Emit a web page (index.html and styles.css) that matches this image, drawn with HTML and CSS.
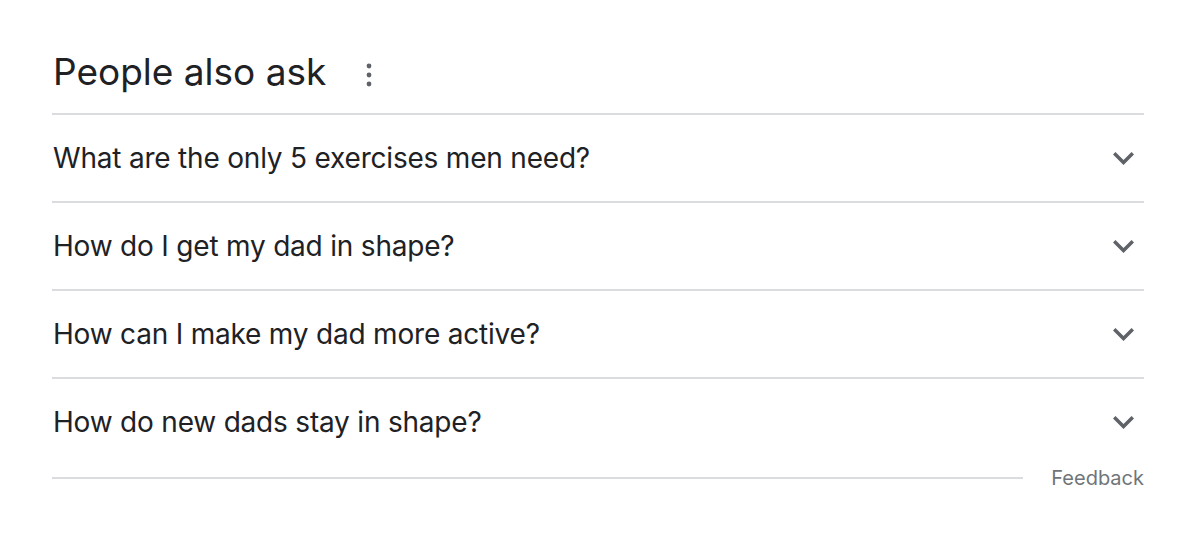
FILE: index.html
```html
<!DOCTYPE html>
<html>
<head>
<meta charset="utf-8">
<link rel="stylesheet" href="styles.css">
</head>
<body>
<div class="paa">
  <div class="paa-head">
    <h2 class="paa-title">People also ask</h2>
    <span class="paa-menu">
      <svg width="6" height="24" viewBox="0 0 6 24"><circle cx="3" cy="3" r="2.4" fill="#5f6368"/><circle cx="3" cy="12" r="2.4" fill="#5f6368"/><circle cx="3" cy="21" r="2.4" fill="#5f6368"/></svg>
    </span>
  </div>
  <div class="paa-row"><span class="paa-q">What are the only 5 exercises men need?</span><svg class="chev" width="21" height="13" viewBox="6 8.59 12 7.41"><path d="M16.59 8.59L12 13.17 7.41 8.59 6 10l6 6 6-6z" fill="#5f6368"/></svg></div>
  <div class="paa-row"><span class="paa-q">How do I get my dad in shape?</span><svg class="chev" width="21" height="13" viewBox="6 8.59 12 7.41"><path d="M16.59 8.59L12 13.17 7.41 8.59 6 10l6 6 6-6z" fill="#5f6368"/></svg></div>
  <div class="paa-row"><span class="paa-q">How can I make my dad more active?</span><svg class="chev" width="21" height="13" viewBox="6 8.59 12 7.41"><path d="M16.59 8.59L12 13.17 7.41 8.59 6 10l6 6 6-6z" fill="#5f6368"/></svg></div>
  <div class="paa-row"><span class="paa-q">How do new dads stay in shape?</span><svg class="chev" width="21" height="13" viewBox="6 8.59 12 7.41"><path d="M16.59 8.59L12 13.17 7.41 8.59 6 10l6 6 6-6z" fill="#5f6368"/></svg></div>
  <div class="paa-foot">
    <div class="foot-line"></div>
    <span class="feedback">Feedback</span>
  </div>
</div>
</body>
</html>
```

FILE: styles.css
```css
html, body {
  margin: 0;
  padding: 0;
  background: #ffffff;
}
body {
  font-family: Inter, Roboto, "Liberation Sans", Arial, sans-serif;
  color: #202124;
}
.paa {
  width: 1092px;
  margin-left: 52px;
}
.paa-head {
  height: 113px;
  display: flex;
  align-items: flex-end;
  padding-bottom: 17px;
  box-sizing: border-box;
}
.paa-title {
  margin: 0;
  font-weight: 400;
  font-size: 37px;
  line-height: 48px;
  letter-spacing: 0;
  padding-left: 1px;
}
.paa-menu {
  display: flex;
  margin-left: 40px;
  margin-bottom: 9px;
}
.paa-row {
  height: 86px;
  border-top: 2px solid #dadce0;
  display: flex;
  align-items: center;
  justify-content: space-between;
}
.paa-q {
  font-size: 28px;
  letter-spacing: -0.2px;
  padding-left: 1px;
}
.chev {
  margin-right: 10px;
  display: block;
}
.paa-foot {
  height: 26px;
  display: flex;
  align-items: center;
}
.foot-line {
  flex: 1;
  height: 2px;
  background: #dadce0;
}
.feedback {
  margin-left: 28px;
  font-size: 20px;
  color: #70757a;
}
```
